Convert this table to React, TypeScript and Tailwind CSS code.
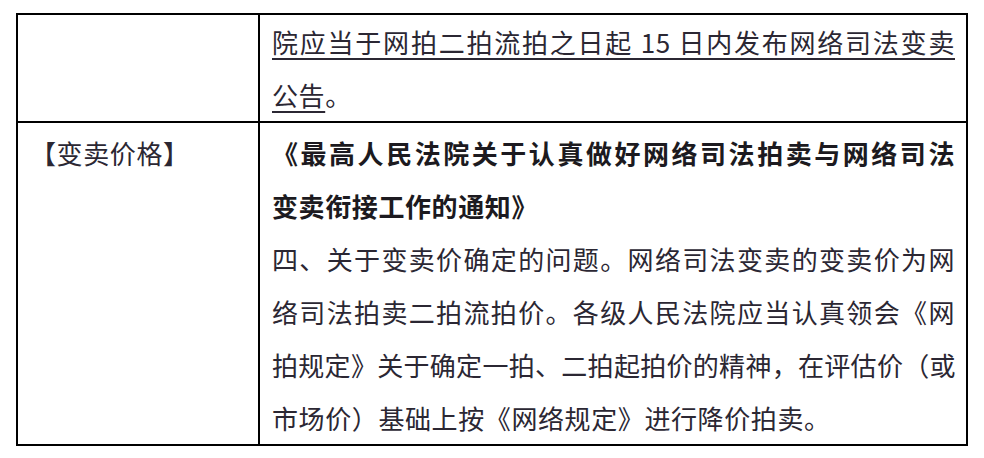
const font = {
  fontFamily: '"Noto Sans CJK SC", "Noto Sans", sans-serif',
};

function Line({
  children,
  justify = true,
  bold = false,
  tight = false,
}: {
  children: React.ReactNode;
  justify?: boolean;
  bold?: boolean;
  tight?: boolean;
}) {
  return (
    <div
      className={
        "h-[53px] w-[683px] whitespace-nowrap leading-[53px] text-[26px] " +
        (tight ? "tracking-[-0.5px] " : "tracking-[0.6px] ") +
        (justify ? "text-justify [text-align-last:justify] " : "") +
        (bold ? "font-bold text-[#1c1a20]" : "text-[#2b2733]")
      }
    >
      {children}
    </div>
  );
}

export default function App() {
  return (
    <div className="h-[458px] w-[984px] bg-white pl-4 pt-[13px]" style={font}>
      <div className="grid w-[952px] grid-cols-[242px_706px] border-2 border-black">
        {/* row 1 */}
        <div className="border-b-2 border-r-2 border-black" />
        <div className="overflow-hidden border-b-2 border-black pl-3">
          <Line>
            <span className="underline decoration-2 underline-offset-[5px]">
              院应当于网拍二拍流拍之日起 15 日内发布网络司法变卖
            </span>
          </Line>
          <Line justify={false}>
            <span className="underline decoration-2 underline-offset-[5px]">公告</span>。
          </Line>
        </div>

        {/* row 2 */}
        <div className="border-r-2 border-black pl-3 pt-[3px]">
          <Line justify={false}>【变卖价格】</Line>
        </div>
        <div className="overflow-hidden pl-3 pt-[3px]">
          <Line bold>《最高人民法院关于认真做好网络司法拍卖与网络司法</Line>
          <Line bold justify={false}>
            变卖衔接工作的通知》
          </Line>
          <Line>四、关于变卖价确定的问题。网络司法变卖的变卖价为网</Line>
          <Line>络司法拍卖二拍流拍价。各级人民法院应当认真领会《网</Line>
          <Line tight>拍规定》关于确定一拍、二拍起拍价的精神，在评估价（或</Line>
          <Line justify={false}>市场价）基础上按《网络规定》进行降价拍卖。</Line>
        </div>
      </div>
    </div>
  );
}
